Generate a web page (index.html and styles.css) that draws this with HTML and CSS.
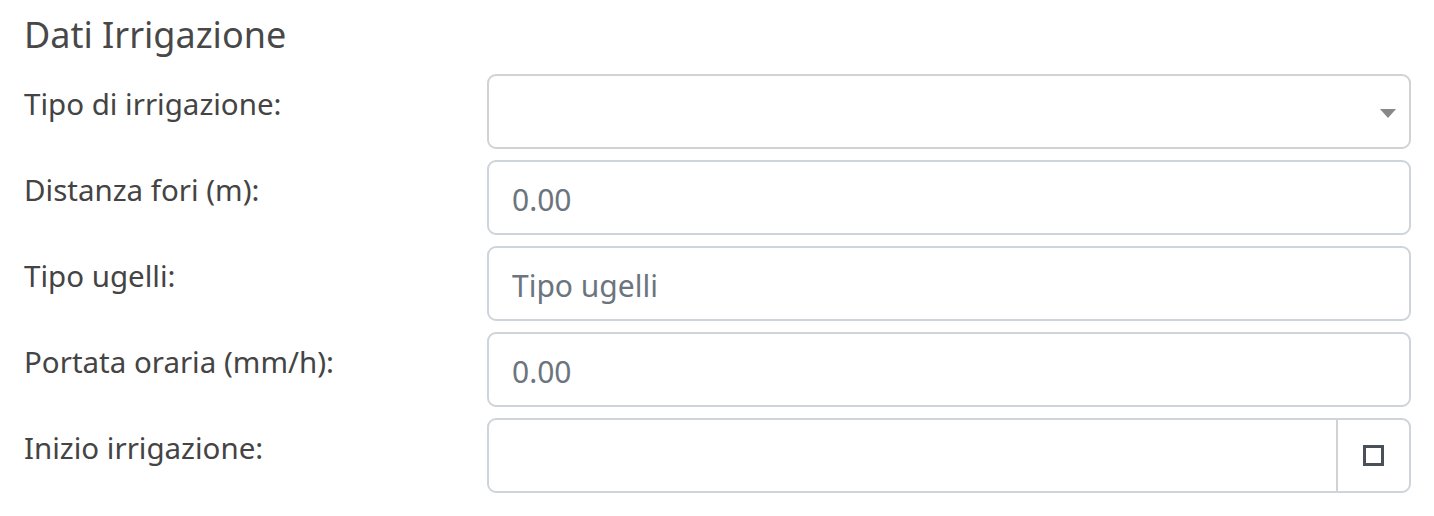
FILE: index.html
```html
<!DOCTYPE html>
<html lang="it">
<head>
  <meta charset="UTF-8" />
  <title>Dati Irrigazione</title>
  <link rel="stylesheet" href="styles.css">
</head>
<body>
  <div class="page">
    <h2>Dati Irrigazione</h2>

    <div class="form-row">
      <label class="form-label">Tipo di irrigazione:</label>
      <div class="form-field">
        <div class="select-box">
          <span class="select-arrow"></span>
        </div>
      </div>
    </div>

    <div class="form-row">
      <label class="form-label">Distanza fori (m):</label>
      <div class="form-field">
        <input type="text" class="form-input" placeholder="0.00" />
      </div>
    </div>

    <div class="form-row">
      <label class="form-label">Tipo ugelli:</label>
      <div class="form-field">
        <input type="text" class="form-input" placeholder="Tipo ugelli" />
      </div>
    </div>

    <div class="form-row">
      <label class="form-label">Portata oraria (mm/h):</label>
      <div class="form-field">
        <input type="text" class="form-input" placeholder="0.00" />
      </div>
    </div>

    <div class="form-row">
      <label class="form-label">Inizio irrigazione:</label>
      <div class="form-field">
        <div class="date-group">
          <input type="text" class="date-input" />
          <span class="date-addon"><span class="date-icon"></span></span>
        </div>
      </div>
    </div>
  </div>
</body>
</html>
```

FILE: styles.css
```css
/* === Basic Reset === */
* {
  margin: 0;
  padding: 0;
  box-sizing: border-box;
}

body {
  font-family: 'Noto Sans', sans-serif;
  background: #fff;
  color: #444;
}

.page {
  padding: 10px 23px 0 24px;
}

h2 {
  font-size: 36px;
  font-weight: 400;
  line-height: 50px;
  color: #484848;
  margin-bottom: 14px;
}

.form-row {
  display: flex;
  align-items: flex-start;
  margin-bottom: 11px;
}

.form-label {
  width: 463px;
  font-size: 29.5px;
  line-height: 40px;
  padding-top: 10px;
  color: #444;
}

.form-field {
  flex: 1;
}

.select-box,
.form-input,
.date-group {
  display: flex;
  align-items: center;
  width: 100%;
  height: 75px;
  border: 2px solid #ced4da;
  border-radius: 9px;
  background: #fff;
}

.select-box {
  border-color: #d2d2d2;
  justify-content: flex-end;
  padding-right: 13px;
}

.select-arrow {
  width: 0;
  height: 0;
  border-left: 8px solid transparent;
  border-right: 8px solid transparent;
  border-top: 9px solid #888;
  margin-top: 4px;
}

.form-input {
  padding: 3px 23px 0;
  font-family: inherit;
  font-size: 30px;
  color: #495057;
  outline: none;
}

.form-input::placeholder {
  color: #6c757d;
}

.date-group {
  overflow: hidden;
}

.date-input {
  flex: 1;
  height: 100%;
  border: none;
  outline: none;
  background: transparent;
}

.date-addon {
  width: 73px;
  height: 100%;
  border-left: 2px solid #d2d2d2;
  display: flex;
  align-items: center;
  justify-content: center;
}

.date-icon {
  width: 21px;
  height: 21px;
  border: 3px solid #495057;
}
```
